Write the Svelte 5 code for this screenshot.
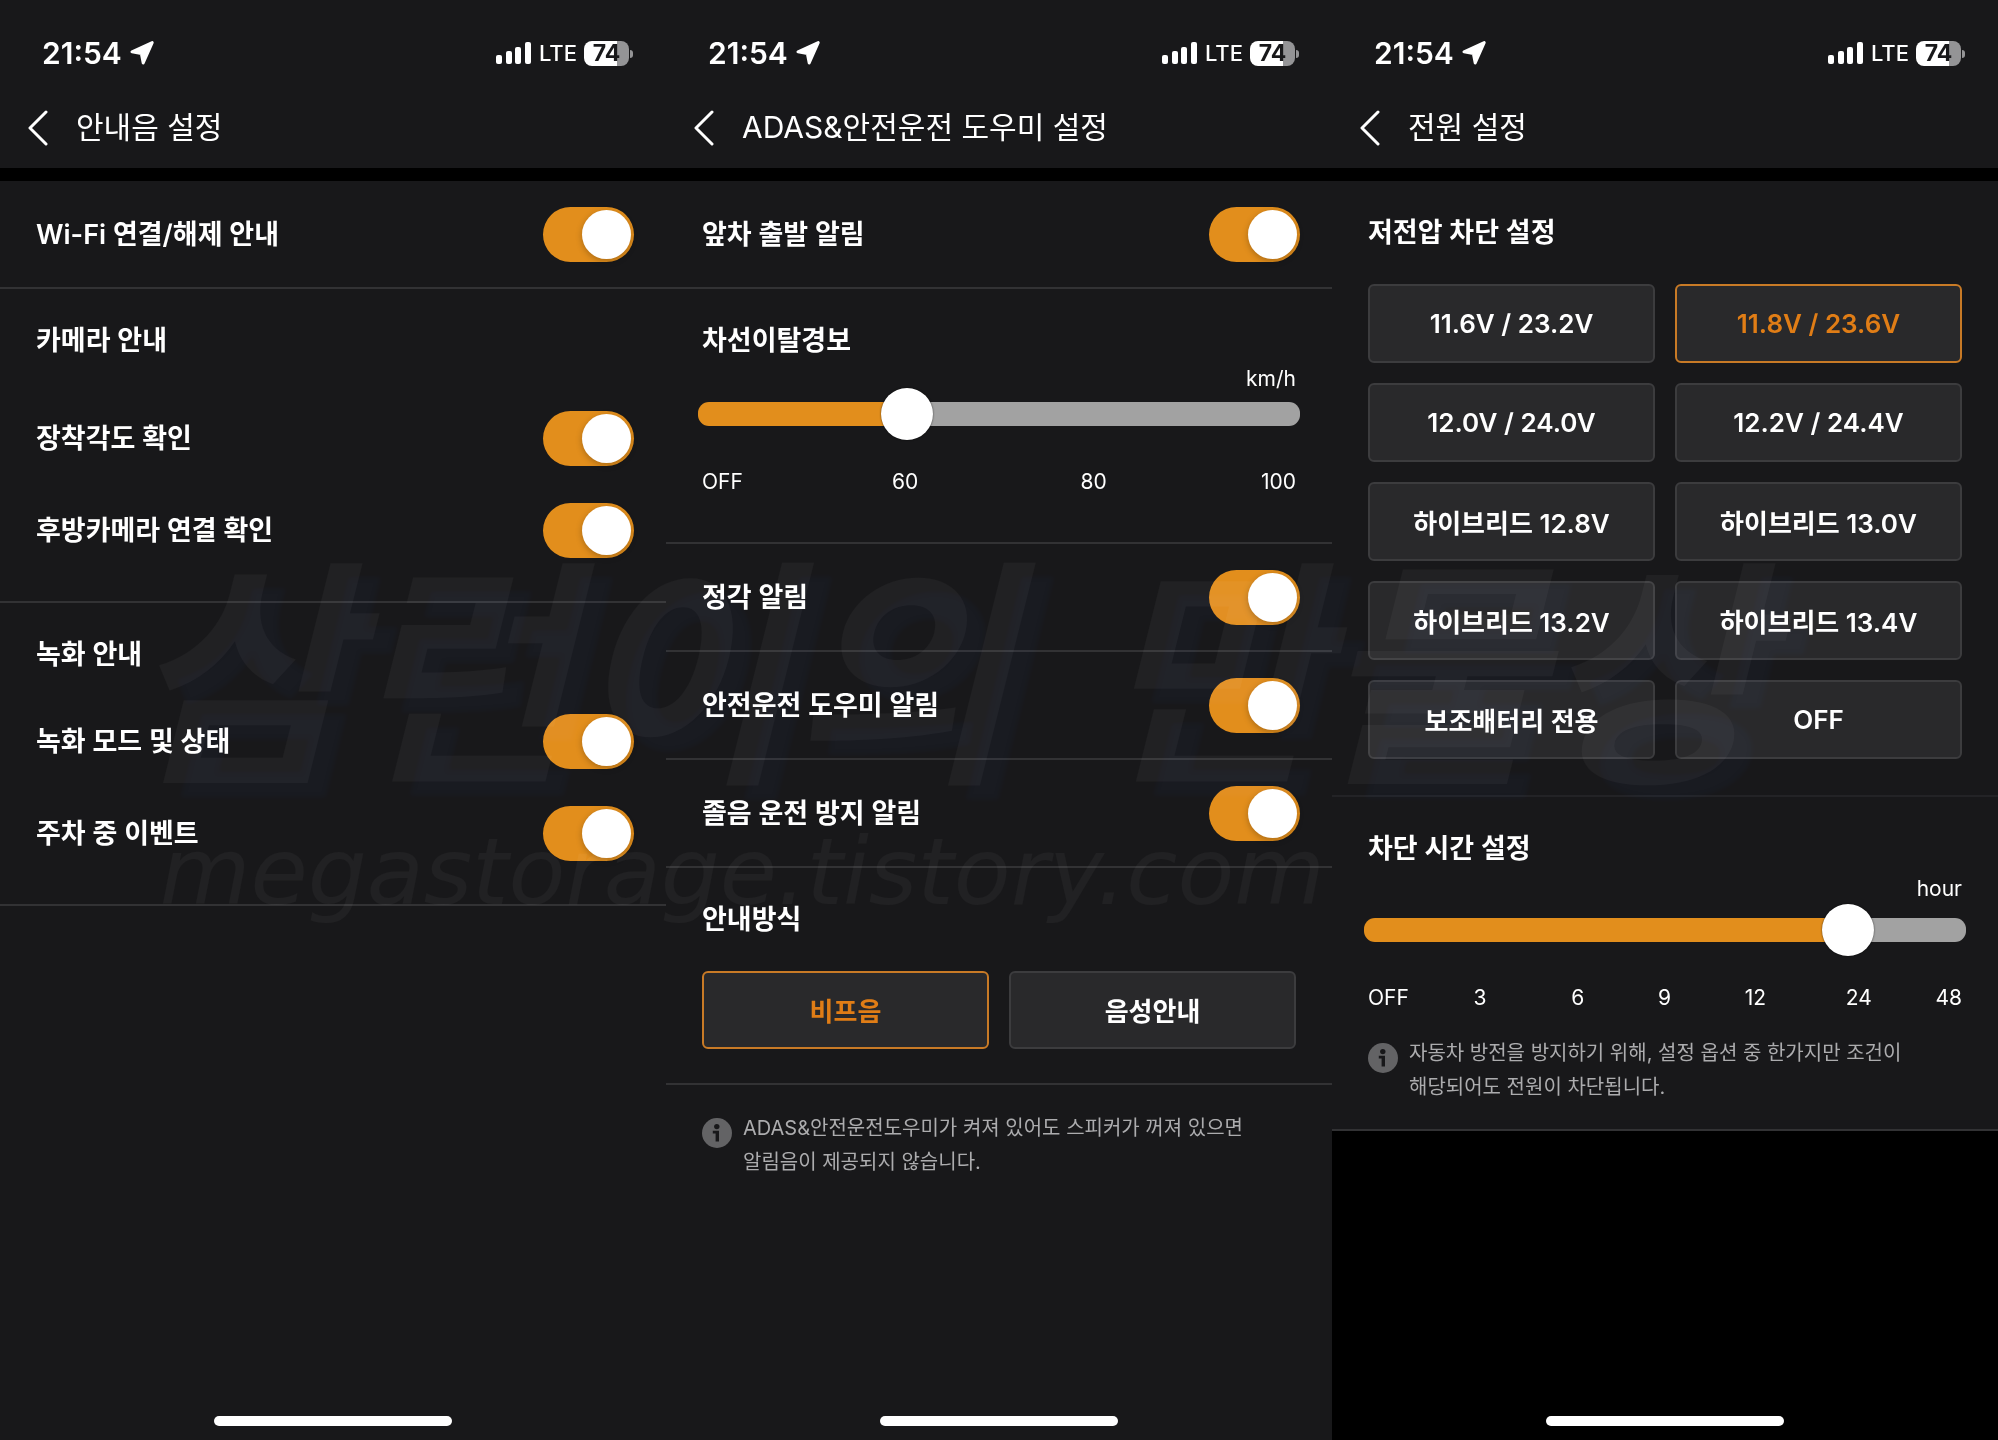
<script>
  let alerts = $state({
    wifi: true,
    angle: true,
    rear: true,
    record: true,
    parking: true,
    depart: true,
    hourly: true,
    safety: true,
    drowsy: true
  });

  let lane = $state(1);
  let cutoff = $state(5);
  let guide = $state('비프음');
  let voltage = $state('11.8V / 23.6V');

  const guides = ['비프음', '음성안내'];
  const voltages = [
    '11.6V / 23.2V',
    '11.8V / 23.6V',
    '12.0V / 24.0V',
    '12.2V / 24.4V',
    '하이브리드 12.8V',
    '하이브리드 13.0V',
    '하이브리드 13.2V',
    '하이브리드 13.4V',
    '보조배터리 전용',
    'OFF'
  ];

  // room = share of the free space that follows the label
  const speeds = [
    { text: 'OFF', room: 149 },
    { text: '60', room: 162 },
    { text: '80', room: 154 },
    { text: '100', room: 0 }
  ];
  const hours = [
    { text: 'OFF', room: 65 },
    { text: '3', room: 85 },
    { text: '6', room: 74 },
    { text: '9', room: 74 },
    { text: '12', room: 80 },
    { text: '24', room: 64 },
    { text: '48', room: 0 }
  ];
</script>

{#snippet header(title)}
  <header>
    <div class="status">
      <div class="time">
        <span>21:54</span>
        <svg width="24" height="24" viewBox="0 0 24 24" aria-hidden="true">
          <path d="M22.2 1.6 13.2 22 11.4 12.6 2 10.8Z" fill="#fff" stroke="#fff" stroke-width="3" stroke-linejoin="round" />
        </svg>
      </div>
      <div class="signal">
        <svg width="36" height="22" viewBox="0 0 36 22" aria-hidden="true">
          <rect x="0" y="13" width="6" height="9" rx="2" fill="#fff" />
          <rect x="10" y="9" width="6" height="13" rx="2" fill="#fff" />
          <rect x="19" y="5" width="6" height="17" rx="2" fill="#fff" />
          <rect x="29" y="0" width="6" height="22" rx="2" fill="#fff" />
        </svg>
        <span class="network">LTE</span>
        <span class="battery">74</span>
      </div>
    </div>
    <div class="nav">
      <button class="back" aria-label="뒤로">
        <svg width="20" height="36" viewBox="0 0 20 36" aria-hidden="true">
          <path d="M18 2 2 18 18 34" fill="none" stroke="#fff" stroke-width="3" stroke-linecap="round" stroke-linejoin="round" />
        </svg>
      </button>
      <h1>{title}</h1>
    </div>
  </header>
{/snippet}

{#snippet toggle(key, label)}
  <label class="row">
    <span>{label}</span>
    <input class="switch" type="checkbox" role="switch" bind:checked={alerts[key]} />
  </label>
{/snippet}

{#snippet ticks(list)}
  <div class="ticks">
    {#each list as tick}
      <span style="flex-grow: {tick.room}">{tick.text}</span>
    {/each}
  </div>
{/snippet}

{#snippet note(text)}
  <div class="note">
    <svg width="30" height="30" viewBox="0 0 30 30" aria-hidden="true">
      <circle cx="15" cy="15" r="15" fill="#636365" />
      <circle cx="14.8" cy="8.6" r="2.7" fill="#18181a" />
      <path d="M10.8 12.8H17V23.6H13.6V15.6H10.8Z" fill="#18181a" />
    </svg>
    <p>{text}</p>
  </div>
{/snippet}

<div class="screens">
  <main class="screen">
    {@render header('안내음 설정')}
    <section class="single">
      {@render toggle('wifi', 'Wi-Fi 연결/해제 안내')}
    </section>
    <section class="group">
      <h2>카메라 안내</h2>
      {@render toggle('angle', '장착각도 확인')}
      {@render toggle('rear', '후방카메라 연결 확인')}
    </section>
    <section class="group tight">
      <h2>녹화 안내</h2>
      {@render toggle('record', '녹화 모드 및 상태')}
      {@render toggle('parking', '주차 중 이벤트')}
    </section>
    <footer><div class="home"></div></footer>
  </main>

  <main class="screen">
    {@render header('ADAS&안전운전 도우미 설정')}
    <section class="single">
      {@render toggle('depart', '앞차 출발 알림')}
    </section>
    <section class="lane">
      <h2><label for="lane">차선이탈경보</label></h2>
      <div class="unit">km/h</div>
      <input id="lane" class="slider" type="range" min="0" max="3" bind:value={lane} style="--fill: {(lane / 3) * 100}%" />
      {@render ticks(speeds)}
    </section>
    <section class="single">
      {@render toggle('hourly', '정각 알림')}
    </section>
    <section class="single">
      {@render toggle('safety', '안전운전 도우미 알림')}
    </section>
    <section class="single">
      {@render toggle('drowsy', '졸음 운전 방지 알림')}
    </section>
    <section class="guide">
      <h2>안내방식</h2>
      <div class="choices">
        {#each guides as item}
          <button class="choice" class:active={guide === item} onclick={() => (guide = item)}>{item}</button>
        {/each}
      </div>
    </section>
    <section class="plain">
      {@render note('ADAS&안전운전도우미가 켜져 있어도 스피커가 꺼져 있으면 알림음이 제공되지 않습니다.')}
    </section>
    <footer><div class="home"></div></footer>
  </main>

  <main class="screen dark">
    {@render header('전원 설정')}
    <section class="voltage">
      <h2>저전압 차단 설정</h2>
      <div class="choices">
        {#each voltages as item}
          <button class="choice" class:active={voltage === item} onclick={() => (voltage = item)}>{item}</button>
        {/each}
      </div>
    </section>
    <section class="cutoff">
      <h2><label for="cutoff">차단 시간 설정</label></h2>
      <div class="unit">hour</div>
      <input id="cutoff" class="slider" type="range" min="0" max="6" bind:value={cutoff} style="--fill: {(cutoff / 6) * 100}%" />
      {@render ticks(hours)}
      {@render note('자동차 방전을 방지하기 위해, 설정 옵션 중 한가지만 조건이 해당되어도 전원이 차단됩니다.')}
    </section>
    <footer><div class="home"></div></footer>
  </main>

  <div class="watermark" aria-hidden="true">
    <div class="mark-name"><span>삼런이의</span><span>만물상</span></div>
    <div class="mark-url">megastorage.tistory.com</div>
  </div>
</div>

<style>
  :global(body) {
    background: #000;
  }

  .screens {
    position: relative;
    display: grid;
    grid-template-columns: repeat(3, 1fr);
    min-height: 100vh;
    overflow: hidden;
    color: #fff;
    font-family: Inter, 'Noto Sans CJK KR', sans-serif;
  }

  .screen {
    display: flex;
    flex-direction: column;
    min-width: 0;
    background: #18181a;
  }

  .screen.dark {
    background: #000;
  }

  header {
    background: #18181a;
    border-bottom: 13px solid #000;
  }

  .status {
    display: flex;
    justify-content: space-between;
    align-items: center;
    height: 70px;
    padding: 18px 37px 0 42px;
  }

  .time {
    display: flex;
    align-items: center;
    gap: 8px;
    font-size: 30px;
    font-weight: 600;
  }

  .signal {
    display: flex;
    align-items: center;
    gap: 7px;
  }

  .network {
    font-size: 22px;
    font-weight: 500;
  }

  .battery {
    position: relative;
    width: 45px;
    border-radius: 8px;
    background: linear-gradient(to right, #fff 74%, #949496 74%);
    color: #18181a;
    font-size: 23px;
    font-weight: 700;
    line-height: 25px;
    text-align: center;
  }

  .battery::after {
    content: '';
    position: absolute;
    top: 9px;
    right: -4px;
    width: 3px;
    height: 8px;
    border-radius: 0 3px 3px 0;
    background: #949496;
  }

  .nav {
    display: flex;
    align-items: center;
    gap: 28px;
    height: 80px;
    padding: 0 28px;
  }

  .back {
    display: flex;
    padding: 0;
    border: 0;
    background: none;
    cursor: pointer;
  }

  h1 {
    margin: 0;
    padding-bottom: 2px;
    font-size: 30px;
    font-weight: 400;
    line-height: 40px;
  }

  section {
    padding: 32px 36px 0;
    border-bottom: 2px solid #323234;
    background: #18181a;
  }

  h2 {
    margin: 0 0 31px;
    font-size: 27px;
    font-weight: 600;
    line-height: 40px;
  }

  .row {
    display: flex;
    justify-content: space-between;
    align-items: center;
    height: 92px;
    margin-right: -4px;
    font-size: 27px;
    font-weight: 600;
  }

  .row span {
    padding-bottom: 3px;
  }

  .single {
    padding-top: 0;
  }

  .single .row {
    height: 106px;
  }

  .group {
    padding-bottom: 25px;
  }

  .tight h2 {
    margin-bottom: 20px;
  }

  .switch {
    appearance: none;
    width: 91px;
    height: 55px;
    margin: 0;
    padding: 3px;
    border-radius: 28px;
    background: #636365;
    cursor: pointer;
  }

  .switch::before {
    content: '';
    display: block;
    width: 49px;
    height: 49px;
    border-radius: 50%;
    background: #fff;
    box-shadow: 0 2px 6px rgba(0, 0, 0, 0.25);
  }

  .switch:checked {
    background: #e28e1c;
  }

  .switch:checked::before {
    margin-left: auto;
  }

  .unit,
  .ticks {
    font-size: 21px;
    line-height: 24px;
  }

  .unit {
    text-align: right;
  }

  .lane {
    padding-bottom: 48px;
  }

  .lane h2 {
    margin-bottom: 6px;
  }

  .lane .unit {
    margin-bottom: 11px;
  }

  .slider {
    appearance: none;
    display: block;
    width: calc(100% + 8px);
    height: 24px;
    margin: 0 -4px;
    border-radius: 11px;
    background: linear-gradient(to right, #e28e1c var(--fill), #a2a2a2 var(--fill));
    cursor: pointer;
  }

  .slider::-webkit-slider-thumb {
    appearance: none;
    width: 52px;
    height: 52px;
    border-radius: 50%;
    background: #fff;
    box-shadow: 0 0 2px rgba(0, 0, 0, 0.7);
  }

  .ticks {
    display: flex;
    margin-top: 44px;
  }

  .choices {
    display: grid;
    grid-template-columns: 1fr 1fr;
    gap: 20px;
  }

  .choice {
    height: 79px;
    padding: 0 0 1px;
    border: 2px solid #3c3c3e;
    border-radius: 6px;
    background: #29292b;
    color: #fff;
    font-family: inherit;
    font-size: 26px;
    font-weight: 600;
    cursor: pointer;
  }

  .choice.active {
    border-color: #c87a26;
    color: #e07d16;
  }

  .guide {
    padding-bottom: 34px;
  }

  .guide .choice {
    height: 78px;
  }

  .plain {
    padding-top: 26px;
    border: 0;
  }

  .voltage {
    padding-bottom: 36px;
    border-color: #232326;
  }

  .cutoff {
    padding-bottom: 25px;
  }

  .cutoff h2 {
    margin-bottom: 8px;
  }

  .cutoff .unit {
    margin-bottom: 17px;
  }

  .note {
    display: flex;
    gap: 11px;
    color: #acacae;
    font-size: 20px;
    line-height: 34px;
  }

  .cutoff .note {
    margin-top: 26px;
  }

  .note svg {
    flex: none;
    margin-top: 7px;
  }

  .note p {
    max-width: 520px;
    margin: 0;
    word-break: keep-all;
  }

  footer {
    display: flex;
    justify-content: center;
    margin-top: auto;
    padding-bottom: 14px;
  }

  .home {
    width: 238px;
    height: 10px;
    border-radius: 5px;
    background: #fff;
  }

  /* faint site mark laid over all three screens */
  .watermark {
    position: absolute;
    top: 532px;
    left: 8%;
    color: rgba(255, 255, 255, 0.04);
    font-style: italic;
    white-space: nowrap;
    pointer-events: none;
    mix-blend-mode: screen;
  }

  .mark-name {
    display: flex;
    gap: 88px;
    margin-left: -32px;
    font-size: 240px;
    font-weight: 700;
    line-height: 290px;
    text-shadow: 18px 14px 4px rgba(20, 50, 140, 0.06);
  }

  .mark-url {
    font-family: 'DejaVu Sans', sans-serif;
    font-size: 93px;
    line-height: 100px;
  }
</style>
